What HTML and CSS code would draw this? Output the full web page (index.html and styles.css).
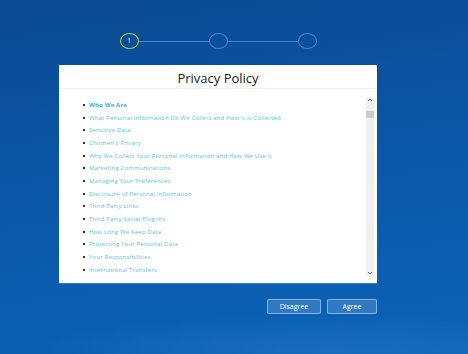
FILE: index.html
```html
<!DOCTYPE html>
<html>
<head>
<meta charset="utf-8">
<link rel="stylesheet" href="styles.css">
</head>
<body>
<div class="page">
  <div class="steps">
    <div class="step active">1</div>
    <div class="line"></div>
    <div class="step"></div>
    <div class="line"></div>
    <div class="step"></div>
  </div>
  <div class="card">
    <div class="card-head">Privacy Policy</div>
    <div class="card-body">
      <ul class="toc">
        <li class="strong">Who We Are</li>
        <li>What Personal Information Do We Collect and How It Is Collected</li>
        <li>Sensitive Data</li>
        <li>Children's Privacy</li>
        <li>Why We Collect Your Personal Information and How We Use It</li>
        <li>Marketing Communications</li>
        <li>Managing Your Preferences</li>
        <li>Disclosure of Personal Information</li>
        <li>Third Party Links</li>
        <li>Third Party Social Plug-ins</li>
        <li>How Long We Keep Data</li>
        <li>Protecting Your Personal Data</li>
        <li>Your Responsibilities</li>
        <li>International Transfers</li>
      </ul>
      <div class="scrollbar">
        <svg class="arrow" width="8" height="6" viewBox="0 0 8 6"><path d="M2 4 L4 2 L6 4" fill="none" stroke="#606060" stroke-width="1"/></svg>
        <div class="thumb"></div>
        <div class="track-fill"></div>
        <svg class="arrow" width="8" height="6" viewBox="0 0 8 6"><path d="M2 2 L4 4 L6 2" fill="none" stroke="#606060" stroke-width="1"/></svg>
      </div>
    </div>
  </div>
  <div class="actions">
    <button class="btn btn-wide">Disagree</button>
    <button class="btn">Agree</button>
  </div>
</div>
</body>
</html>
```

FILE: styles.css
```css
html, body {
  margin: 0;
  padding: 0;
  height: 100%;
}
body {
  font-family: "Open Sans", "Noto Sans", sans-serif;
  background:
    radial-gradient(ellipse 420px 50px at 330px 350px, rgba(120, 180, 240, 0.12), rgba(120, 180, 240, 0) 70%),
    linear-gradient(172deg, #0a4a92 0%, #0b56a6 45%, #0b5eb1 75%, #0c63b8 100%);
  overflow: hidden;
}
.page {
  width: 318px;
  margin-left: 59px;
  padding-top: 33px;
}
.steps {
  display: flex;
  align-items: center;
  justify-content: center;
  height: 16px;
}
.step {
  box-sizing: border-box;
  width: 19px;
  height: 16px;
  border-radius: 50%;
  border: 1px solid #3b88cc;
  color: #d8e6f2;
  font-size: 7px;
  line-height: 14px;
  text-align: center;
}
.step.active {
  border: 1.5px solid #a8d13c;
  line-height: 13px;
}
.line {
  width: 70px;
  height: 1px;
  background: #3d86c8;
}
.card {
  margin-top: 16px;
  height: 218px;
  background: #ffffff;
  box-shadow: 0 1px 0 #3a7fc8;
  display: flex;
  flex-direction: column;
}
.card-head {
  height: 24px;
  box-sizing: border-box;
  border-bottom: 1px solid #f0f0f0;
  text-align: center;
  font-size: 13px;
  line-height: 26px;
  color: #1a1a1a;
}
.card-body {
  display: flex;
  padding-top: 8px;
  height: 179px;
}
.toc {
  flex: 1;
  list-style: none;
  margin: 0;
  padding: 1.5px 0 0 24px;
}
.toc li {
  display: flex;
  align-items: center;
  height: 12.7px;
  font-size: 6px;
  letter-spacing: 0.17px;
  color: #5bbfdc;
  white-space: nowrap;
}
.toc li::before {
  content: "";
  width: 2px;
  height: 2px;
  background: #333;
  margin-right: 4px;
  flex: none;
}
.toc li.strong {
  font-weight: 700;
  color: #45aed4;
}
.scrollbar {
  width: 8px;
  margin-right: 3px;
  background: #f0f0f0;
  display: flex;
  flex-direction: column;
  align-items: center;
}
.arrow {
  display: block;
  flex: none;
}
.thumb {
  width: 8px;
  height: 7px;
  margin-top: 8px;
  background: #cdcdcd;
  flex: none;
}
.track-fill {
  flex: 1;
}
.actions {
  display: flex;
  justify-content: flex-end;
  gap: 6px;
  margin-top: 16px;
}
.btn {
  box-sizing: border-box;
  width: 50px;
  height: 15px;
  padding: 0;
  border: 1px solid rgba(170, 205, 240, 0.7);
  border-radius: 2px;
  background: rgba(120, 170, 225, 0.35);
  color: #ffffff;
  font-family: "Open Sans", "Noto Sans", sans-serif;
  font-size: 7px;
  line-height: 13px;
}
.btn-wide {
  width: 54px;
}
```
